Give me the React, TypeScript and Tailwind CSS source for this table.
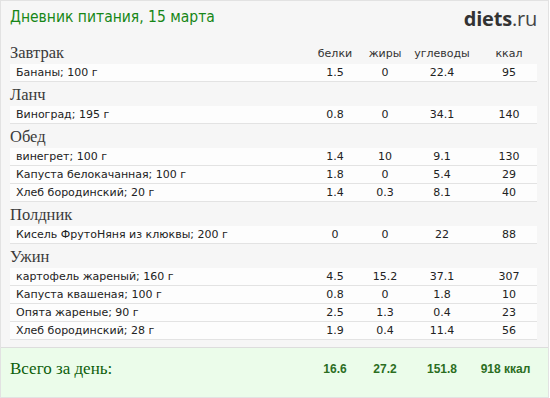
import React from "react";

type Row = { name: string; p: string; f: string; c: string; k: string };
type Section = { title: string; rows: Row[] };

const sections: Section[] = [
  { title: "Завтрак", rows: [{ name: "Бананы; 100 г", p: "1.5", f: "0", c: "22.4", k: "95" }] },
  { title: "Ланч", rows: [{ name: "Виноград; 195 г", p: "0.8", f: "0", c: "34.1", k: "140" }] },
  {
    title: "Обед",
    rows: [
      { name: "винегрет; 100 г", p: "1.4", f: "10", c: "9.1", k: "130" },
      { name: "Капуста белокачанная; 100 г", p: "1.8", f: "0", c: "5.4", k: "29" },
      { name: "Хлеб бородинский; 20 г", p: "1.4", f: "0.3", c: "8.1", k: "40" },
    ],
  },
  { title: "Полдник", rows: [{ name: "Кисель ФрутоНяня из клюквы; 200 г", p: "0", f: "0", c: "22", k: "88" }] },
  {
    title: "Ужин",
    rows: [
      { name: "картофель жареный; 160 г", p: "4.5", f: "15.2", c: "37.1", k: "307" },
      { name: "Капуста квашеная; 100 г", p: "0.8", f: "0", c: "1.8", k: "10" },
      { name: "Опята жареные; 90 г", p: "2.5", f: "1.3", c: "0.4", k: "23" },
      { name: "Хлеб бородинский; 28 г", p: "1.9", f: "0.4", c: "11.4", k: "56" },
    ],
  },
];

const sans = { fontFamily: '"DejaVu Sans", Verdana, sans-serif' };
const serif = { fontFamily: '"Liberation Serif", "DejaVu Serif", serif' };
const bold = { fontFamily: '"Liberation Sans", Arial, sans-serif' };

export default function App() {
  return (
    <div className="w-[549px] h-[398px] border border-[#e2e2e2] bg-[#f6f6f6] flex flex-col overflow-hidden">
      <div className="h-[39px] flex items-start justify-between pl-[9px] pr-[11px] pt-[6px]">
        <div
          className="text-[15.5px] leading-[20px] text-[#178717]"
          style={{ fontFamily: '"DejaVu Sans Condensed", "DejaVu Sans", Verdana, sans-serif', fontStretch: "condensed" }}
        >
          Дневник питания, 15 марта
        </div>
        <div className="text-[20px] leading-[22px] text-[#333] tracking-[-0.2px] pt-[1px]" style={{ fontFamily: '"Open Sans", Arial, sans-serif' }}>
          <span className="font-bold">diets</span>
          <span className="text-[#444]">.ru</span>
        </div>
      </div>

      <div className="pl-[9px] pr-[11px] h-[300px]">
        {sections.map((s, si) => (
          <div key={s.title}>
            <div className="h-[24px] grid grid-cols-[1fr_50px_50px_64px_63px] items-end">
              <div className="text-[16.5px] leading-[20px] text-[#3a3a3a] pb-[1px]" style={serif}>
                {s.title}
              </div>
              {si === 0 && (
                <>
                  <div className="text-[11px] leading-[14px] text-[#333] text-center pb-[3px]" style={sans}>белки</div>
                  <div className="text-[11px] leading-[14px] text-[#333] text-center pb-[3px]" style={sans}>жиры</div>
                  <div className="text-[11px] leading-[14px] text-[#333] text-center pb-[3px]" style={sans}>углеводы</div>
                  <div className="text-[11px] leading-[14px] text-[#333] text-center pl-[7px] pb-[3px]" style={sans}>ккал</div>
                </>
              )}
            </div>
            {s.rows.map((r) => (
              <div
                key={r.name}
                className="h-[18px] grid grid-cols-[1fr_50px_50px_64px_63px] items-center bg-[#fdfdfd] border-b border-[#e3e3e3] text-[11px] leading-[17px] text-[#222]"
                style={sans}
              >
                <div className="pl-[6px]">{r.name}</div>
                <div className="text-center">{r.p}</div>
                <div className="text-center">{r.f}</div>
                <div className="text-center">{r.c}</div>
                <div className="text-center pl-[7px]">{r.k}</div>
              </div>
            ))}
          </div>
        ))}
      </div>

      <div className="mt-[7px] border-t border-[#dddddd] bg-[#ebfcea] flex-1 pl-[9px] pr-[11px] pt-[11px]">
        <div className="grid grid-cols-[1fr_50px_50px_64px_63px] items-center h-[20px]">
          <div className="text-[17px] leading-[20px] text-[#0b5e0b]" style={serif}>
            Всего за день:
          </div>
          <div className="text-center font-bold text-[12px] text-[#2b6e1f]" style={bold}>16.6</div>
          <div className="text-center font-bold text-[12px] text-[#2b6e1f]" style={bold}>27.2</div>
          <div className="text-center font-bold text-[12px] text-[#2b6e1f]" style={bold}>151.8</div>
          <div className="text-center font-bold text-[12px] text-[#2b6e1f]" style={bold}>918 ккал</div>
        </div>
      </div>
    </div>
  );
}
